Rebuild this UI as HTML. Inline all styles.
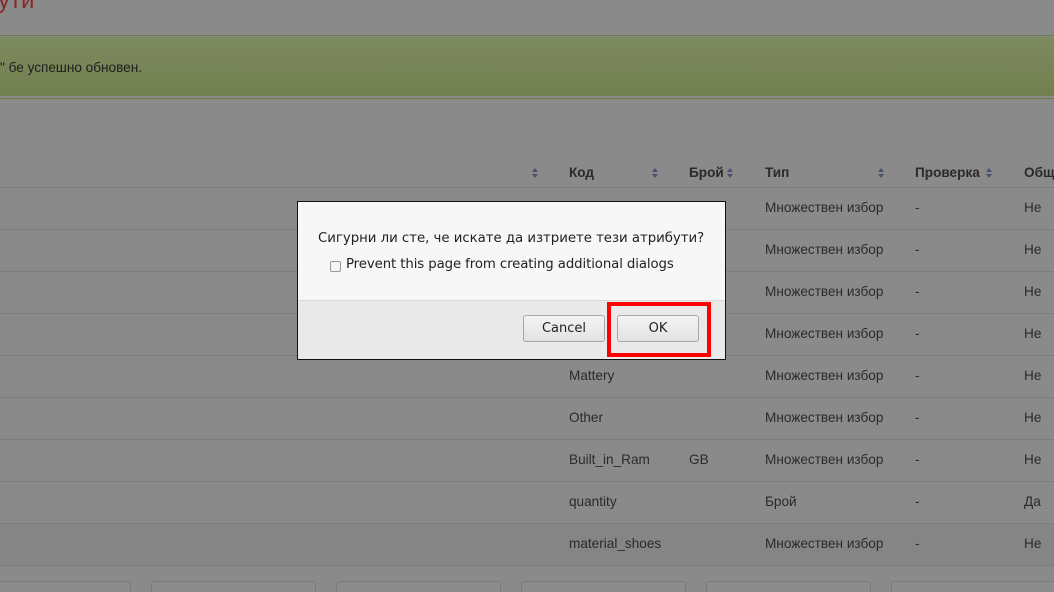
<!DOCTYPE html>
<html style="overflow:hidden;height:592px"><head><meta charset="utf-8"><style>
body{margin:0;width:1054px;height:592px;overflow:hidden;background:#8a8a8a;font-family:"Liberation Sans",sans-serif;font-size:13.6px;color:#2a2a2a;position:relative}
.a{position:absolute}
.hl{position:absolute;left:0;width:1054px;height:1px;background:#7c7c7c}
.t{position:absolute;white-space:nowrap}
.h{font-weight:bold;color:#2a2a2a}
.s{position:absolute;width:0;height:0}
.s:before,.s:after{content:"";position:absolute;left:-3px;border-left:3.5px solid transparent;border-right:3.5px solid transparent}
.s:before{top:-5px;border-bottom:4px solid #4a5070}
.s:after{top:1px;border-top:4px solid #4a5070}
.inp{position:absolute;top:581px;height:20px;border:1px solid #7a7a7a;border-radius:3px;background:#8c8c8c}
.btn{position:absolute;top:315px;width:80px;height:25px;border:1px solid #a8a8a8;border-radius:3px;background:linear-gradient(#f4f4f4,#e2e2e2);text-align:center;line-height:25px;font-size:13px;color:#222;font-family:"DejaVu Sans",sans-serif}
.d{font-family:"DejaVu Sans",sans-serif;font-size:13.3px;color:#222}
</style></head><body>
<div class="t" style="left:-2px;top:-13px;font-size:24px;color:#8a2828">ути</div>
<div class="a" style="left:0;top:35px;width:1054px;height:1px;background:#6d7c46"></div>
<div class="a" style="left:0;top:37px;width:1054px;height:59px;background:linear-gradient(#7e8a60,#72804f)"></div>
<div class="a" style="left:0;top:98px;width:1054px;height:1px;background:#6d7c46"></div>
<div class="t" style="left:0;top:60px;color:#1e1e1e">" бе успешно обновен.</div>
<div class="s" style="left:535px;top:173px"></div>
<div class="t h" style="left:569px;top:165px">Код</div>
<div class="s" style="left:655px;top:173px"></div>
<div class="t h" style="left:689px;top:165px">Брой</div><div class="s" style="left:730px;top:173px"></div>
<div class="t h" style="left:765px;top:165px">Тип</div><div class="s" style="left:881px;top:173px"></div>
<div class="t h" style="left:915px;top:165px">Проверка</div><div class="s" style="left:989px;top:173px"></div>
<div class="t h" style="left:1024px;top:165px">Общ</div>
<div class="hl" style="top:187px"></div><div class="hl" style="top:229px"></div><div class="hl" style="top:271px"></div><div class="hl" style="top:313px"></div><div class="hl" style="top:355px"></div><div class="hl" style="top:397px"></div><div class="hl" style="top:439px"></div><div class="hl" style="top:481px"></div><div class="hl" style="top:523px"></div><div class="hl" style="top:565px"></div>
<div class="a" style="left:0;top:524px;width:1054px;height:41px;background:#858585"></div>
<div class="t" style="left:765px;top:200px">Множествен избор</div><div class="t" style="left:915px;top:200px">-</div><div class="t" style="left:1024px;top:200px">Не</div>
<div class="t" style="left:765px;top:242px">Множествен избор</div><div class="t" style="left:915px;top:242px">-</div><div class="t" style="left:1024px;top:242px">Не</div>
<div class="t" style="left:765px;top:284px">Множествен избор</div><div class="t" style="left:915px;top:284px">-</div><div class="t" style="left:1024px;top:284px">Не</div>
<div class="t" style="left:765px;top:326px">Множествен избор</div><div class="t" style="left:915px;top:326px">-</div><div class="t" style="left:1024px;top:326px">Не</div>
<div class="t" style="left:569px;top:368px">Mattery</div><div class="t" style="left:765px;top:368px">Множествен избор</div><div class="t" style="left:915px;top:368px">-</div><div class="t" style="left:1024px;top:368px">Не</div>
<div class="t" style="left:569px;top:410px">Other</div><div class="t" style="left:765px;top:410px">Множествен избор</div><div class="t" style="left:915px;top:410px">-</div><div class="t" style="left:1024px;top:410px">Не</div>
<div class="t" style="left:569px;top:452px">Built_in_Ram</div><div class="t" style="left:689px;top:452px">GB</div><div class="t" style="left:765px;top:452px">Множествен избор</div><div class="t" style="left:915px;top:452px">-</div><div class="t" style="left:1024px;top:452px">Не</div>
<div class="t" style="left:569px;top:494px">quantity</div><div class="t" style="left:765px;top:494px">Брой</div><div class="t" style="left:915px;top:494px">-</div><div class="t" style="left:1024px;top:494px">Да</div>
<div class="t" style="left:569px;top:536px">material_shoes</div><div class="t" style="left:765px;top:536px">Множествен избор</div><div class="t" style="left:915px;top:536px">-</div><div class="t" style="left:1024px;top:536px">Не</div>
<div class="inp" style="left:-5px;width:134px"></div><div class="inp" style="left:151px;width:163px"></div><div class="inp" style="left:336px;width:163px"></div><div class="inp" style="left:521px;width:163px"></div><div class="inp" style="left:706px;width:163px"></div><div class="inp" style="left:891px;width:170px"></div>
<div class="a" style="left:297px;top:201px;width:427px;height:157px;border:1px solid #111;background:#f7f7f7"></div>
<div class="a" style="left:298px;top:300px;width:427px;height:58px;background:#e9e9e9;border-top:1px solid #d8d8d8"></div>
<div class="t d" style="left:318px;top:231px;letter-spacing:-0.02px">Сигурни ли сте, че искате да изтриете тези атрибути?</div>
<div class="a" style="left:330px;top:261px;width:9px;height:9px;border:1px solid #999;border-radius:2px;background:#f4f4f4"></div>
<div class="t d" style="left:346px;top:257px;letter-spacing:-0.1px">Prevent this page from creating additional dialogs</div>
<div class="btn" style="left:523px">Cancel</div>
<div class="btn" style="left:617px">OK</div>
<div class="a" style="left:607px;top:302px;width:96px;height:47px;border:4px solid #f00"></div>
</body></html>
